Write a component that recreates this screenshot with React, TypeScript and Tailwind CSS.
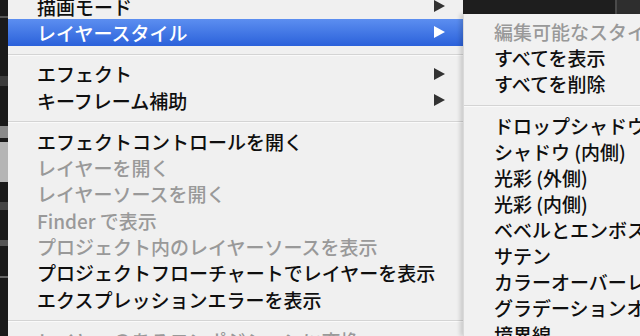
import React from "react";

type Item =
  | { kind: "item"; label: string; disabled?: boolean; sub?: boolean; active?: boolean }
  | { kind: "sep" };

const MAIN: Item[] = [
  { kind: "item", label: "描画モード", sub: true },
  { kind: "item", label: "レイヤースタイル", sub: true, active: true },
  { kind: "sep" },
  { kind: "item", label: "エフェクト", sub: true },
  { kind: "item", label: "キーフレーム補助", sub: true },
  { kind: "sep" },
  { kind: "item", label: "エフェクトコントロールを開く" },
  { kind: "item", label: "レイヤーを開く", disabled: true },
  { kind: "item", label: "レイヤーソースを開く", disabled: true },
  { kind: "item", label: "Finder で表示", disabled: true },
  { kind: "item", label: "プロジェクト内のレイヤーソースを表示", disabled: true },
  { kind: "item", label: "プロジェクトフローチャートでレイヤーを表示" },
  { kind: "item", label: "エクスプレッションエラーを表示" },
  { kind: "sep" },
  { kind: "item", label: "レイヤーのあるコンポジションに変換", disabled: true },
];

const SUB: Item[] = [
  { kind: "item", label: "編集可能なスタイルに変換", disabled: true },
  { kind: "item", label: "すべてを表示" },
  { kind: "item", label: "すべてを削除" },
  { kind: "sep" },
  { kind: "item", label: "ドロップシャドウ" },
  { kind: "item", label: "シャドウ (内側)" },
  { kind: "item", label: "光彩 (外側)" },
  { kind: "item", label: "光彩 (内側)" },
  { kind: "item", label: "ベベルとエンボス" },
  { kind: "item", label: "サテン" },
  { kind: "item", label: "カラーオーバーレイ" },
  { kind: "item", label: "グラデーションオーバーレイ" },
  { kind: "item", label: "境界線" },
];

function Arrow({ light }: { light?: boolean }) {
  return (
    <svg width="11" height="12" viewBox="0 0 11 12" className="shrink-0">
      <path d="M0 0 L11 6 L0 12 Z" fill={light ? "#ffffff" : "#333333"} />
    </svg>
  );
}

function MainRow({ item }: { item: Item }) {
  if (item.kind === "sep") {
    return (
      <div className="h-[15px] pt-[8px]">
        <div className="h-px bg-[#d4d4d4]" />
        <div className="h-px bg-[#fafafa]" />
      </div>
    );
  }
  return (
    <div
      className={[
        "h-[26.3px] flex items-center justify-between pl-[29px] pr-[18px] whitespace-nowrap",
        item.active ? "bg-gradient-to-b from-[#5c8ef0] to-[#2b61da] text-white" : "",
        !item.active && item.disabled ? "text-[#999999]" : "",
        !item.active && !item.disabled ? "text-[#0f0f0f]" : "",
      ].join(" ")}
    >
      <span className="leading-none">{item.label}</span>
      {item.sub && <Arrow light={item.active} />}
    </div>
  );
}

function SubRow({ item }: { item: Item }) {
  if (item.kind === "sep") {
    return (
      <div className="h-[16px] pt-[9px]">
        <div className="h-px bg-[#d4d4d4]" />
        <div className="h-px bg-[#fafafa]" />
      </div>
    );
  }
  return (
    <div
      className={[
        "h-[26.1px] flex items-center pl-[30px] whitespace-nowrap",
        item.disabled ? "text-[#999999]" : "text-[#0f0f0f]",
      ].join(" ")}
    >
      <span className="leading-none">{item.label}</span>
    </div>
  );
}

export default function App() {
  return (
    <div
      className="w-[640px] h-[336px] overflow-hidden flex bg-[#1b1b1b] text-[19px] font-medium"
      style={{ fontFamily: '"Noto Sans CJK JP", "Noto Sans", sans-serif' }}
    >
      {/* Background app peeking at the left edge */}
      <div className="w-[8px] shrink-0 flex flex-col bg-[#1a1a1a]">
        <div className="h-[16px]" />
        <div className="h-[2px] bg-[#555]" />
        <div className="h-[58px]" />
        <div className="h-[10px] bg-[#3c3c3c]" />
        <div className="h-[40px]" />
        <div className="h-[12px] bg-[#8a8a8a]" />
        <div className="h-[4px]" />
        <div className="h-[40px] bg-[#b5b5b5]" />
        <div className="h-[20px]" />
        <div className="h-[8px] bg-[#444]" />
        <div className="h-[30px]" />
        <div className="h-[6px] bg-[#555]" />
        <div className="h-[30px]" />
        <div className="h-[2px] bg-[#666]" />
      </div>

      {/* Main context menu */}
      <div className="w-[455px] shrink-0 bg-[#f0f0f0] overflow-hidden">
        <div className="-mt-[7px] flex flex-col">
          {MAIN.map((it, i) => (
            <MainRow key={i} item={it} />
          ))}
        </div>
      </div>

      {/* Submenu column */}
      <div className="flex-1 min-w-0 flex flex-col">
        <div className="h-[14px] shrink-0 flex">
          <div className="w-[152px] bg-[#1e1e1e]" />
          <div className="w-[2px] bg-[#4a4a4a]" />
          <div className="flex-1 bg-[#2e2e2e]" />
        </div>
        <div className="flex-1 bg-[#f1f1f1] pt-[4px] overflow-hidden shadow-[-3px_0_4px_rgba(0,0,0,0.15)] border-l border-[#d9d9d9]">
          {SUB.map((it, i) => (
            <SubRow key={i} item={it} />
          ))}
        </div>
      </div>
    </div>
  );
}
